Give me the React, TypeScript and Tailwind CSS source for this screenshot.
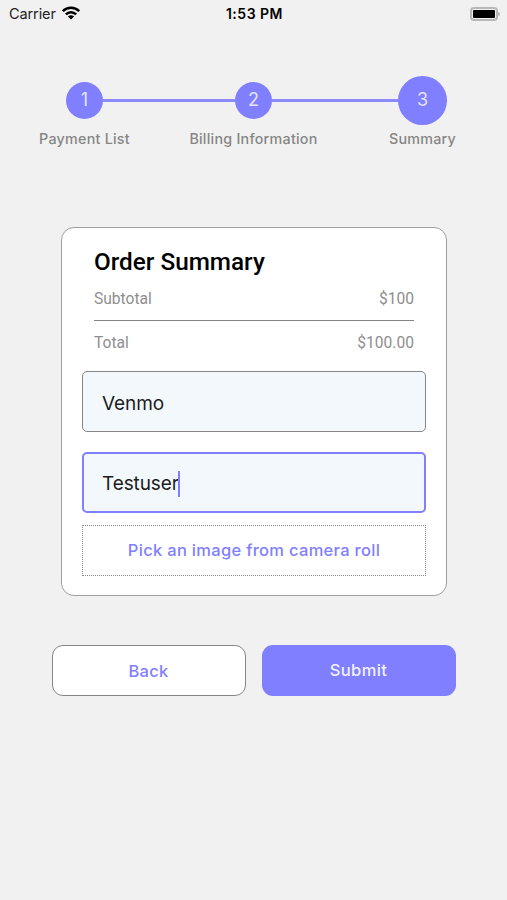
import React from "react";

const steps = [
    { number: 1, label: 'Payment List' },
    { number: 2, label: 'Billing Information' },
    { number: 3, label: 'Summary' },
];

const StatusBar = () => {
    return (
        <div className="grid grid-cols-3 items-center h-7 pl-[9px] pr-[7px] text-black">
            <div className="flex items-center gap-[6px]">
                <span className="text-[14.5px] leading-7 tracking-[-0.1px] text-[#222]">Carrier</span>
                <svg width="18" height="14" viewBox="0 0 18 14" className="-mt-[2px]" fill="none" stroke="currentColor" strokeWidth="2.6">
                    <path d="M0.8 5.2C5.4 0.6 12.6 0.6 17.2 5.2" />
                    <path d="M3.9 8.4C6.8 5.5 11.2 5.5 14.1 8.4" />
                    <path d="M9 13.6L5.9 10.5C7.6 8.8 10.4 8.8 12.1 10.5Z" fill="currentColor" stroke="none" />
                </svg>
            </div>
            <span className="text-center text-[14px] font-semibold leading-7 tracking-[0.5px]">1:53 PM</span>
            <div className="flex items-center justify-end pb-px">
                <div className="w-[28px] h-[14px] rounded-[4px] border-2 border-[#b8b8b8] p-px">
                    <div className="h-full rounded-[1px] bg-black" />
                </div>
                <div className="w-[2px] h-[4px] rounded-r-full bg-[#b8b8b8]" />
            </div>
        </div>
    );
}

const Stepper = () => {
    return (
        <div className="grid grid-cols-3 mt-[47px]">
            {steps.map((step, index) => (
                <div key={step.number} className="flex flex-col items-center">
                    <div className="flex items-center w-full h-[50px]">
                        <div className={index === 0 ? 'flex-1' : 'flex-1 h-[3px] bg-[#8b8bfd]'} />
                        <div
                            className={
                                index === 2
                                    ? 'flex items-center justify-center size-[49px] rounded-full bg-[#7f7fff]'
                                    : 'flex items-center justify-center size-[37px] rounded-full bg-[#7f7fff]'
                            }
                        >
                            <span className="text-[18px] leading-6 text-[#e4e4fa]">{step.number}</span>
                        </div>
                        <div className={index === 2 ? 'flex-1' : 'flex-1 h-[3px] bg-[#8b8bfd]'} />
                    </div>
                    <span className="mt-1 text-[14.3px] font-medium leading-5 tracking-[0.25px] whitespace-nowrap text-[#868686]">
                        {step.label}
                    </span>
                </div>
            ))}
        </div>
    );
}

const OrderSummary = () => {
    return (
        <div className="w-[386px] h-[369px] mt-[78px] ml-[61px] px-5 pt-[19px] rounded-[13px] border border-[#a0a0a0] bg-white">
            <div className="px-3 font-['Roboto',sans-serif]">
                <h1 className="pb-px text-[24.3px] font-medium leading-[30px] text-black">Order Summary</h1>
                <div className="flex justify-between h-[43px] pt-[11px] border-b border-[#868686] text-[15.6px] leading-5 text-[#8e8e8e]">
                    <span>Subtotal</span>
                    <span>$100</span>
                </div>
                <div className="flex justify-between h-[50px] pt-3 text-[15.6px] leading-5 text-[#8e8e8e]">
                    <span>Total</span>
                    <span>$100.00</span>
                </div>
            </div>
            <div className="flex items-center h-[61px] pt-[6px] px-[19px] rounded-[5px] border border-[#868686] bg-[#f3f8fc] text-[19px] tracking-[-0.1px] text-[#1c1c1e]">
                Venmo
            </div>
            <div className="flex items-center h-[61px] mt-[20px] pt-[4px] px-[18px] rounded-[5px] border-2 border-[#7f7fff] bg-[#f3f8fc] text-[19px] tracking-[-0.1px] text-[#1c1c1e]">
                <span>Testuser</span>
                <span className="w-[2px] h-[26px] -ml-px mb-[2px] bg-[#7f7fff]" />
            </div>
            <button className="block w-full h-[51px] mt-3 border border-dotted border-[#868686] text-[16.5px] font-medium tracking-[0.3px] text-[#7f7fff]">
                Pick an image from camera roll
            </button>
        </div>
    );
}

export default function App() {
    return (
        <div className="w-full h-screen overflow-hidden bg-[#f1f1f1] font-['Inter',sans-serif]">
            <StatusBar />
            <Stepper />
            <OrderSummary />
            <div className="flex justify-center gap-4 mt-[49px]">
                <button className="w-[194px] h-[51px] pt-px rounded-[11px] border border-[#868686] bg-white text-[16.5px] font-medium tracking-[0.3px] text-[#7f7fff]">
                    Back
                </button>
                <button className="w-[194px] h-[51px] pb-px rounded-[11px] bg-[#7f7fff] text-[16.5px] font-medium tracking-[0.4px] text-[#f1f1ff]">
                    Submit
                </button>
            </div>
        </div>
    );
}
